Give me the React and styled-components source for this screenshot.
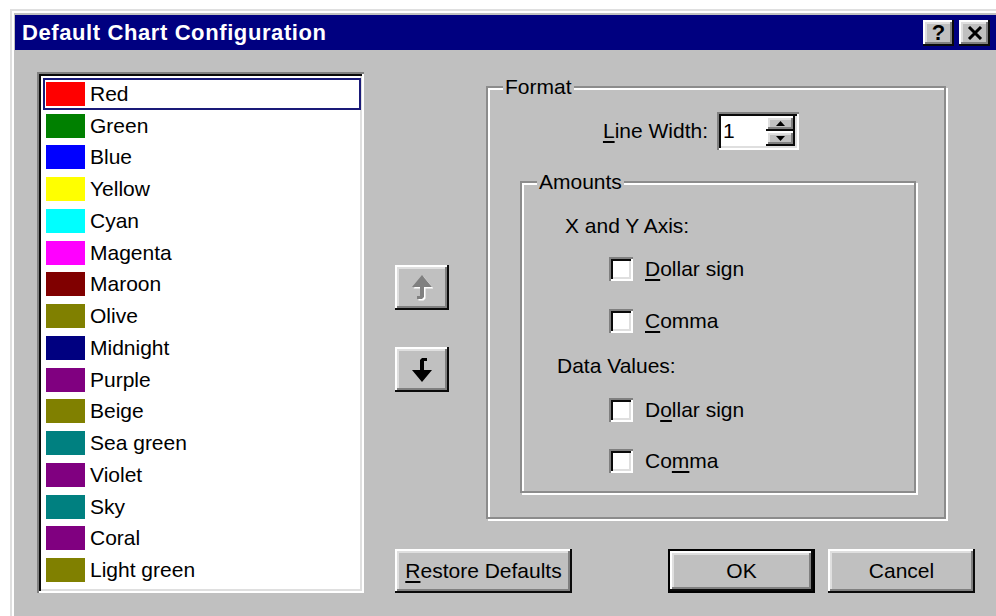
import React from "react";
import styled, { createGlobalStyle, css } from "styled-components";

const GlobalStyle = createGlobalStyle`
  html, body {
    margin: 0;
    padding: 0;
    background: #ffffff;
    overflow: hidden;
  }
  body {
    font-family: "Liberation Sans", Arial, sans-serif;
  }
`;

const raised = css`
  background: #c0c0c0;
  box-shadow: inset -2px -2px 0 #0a0a0a, inset 2px 2px 0 #ffffff,
    inset -4px -4px 0 #808080, inset 4px 4px 0 #dfdfdf;
`;

const sunken = css`
  background: #ffffff;
  box-shadow: inset 2px 2px 0 #808080, inset -2px -2px 0 #ffffff,
    inset 4px 4px 0 #0a0a0a, inset -4px -4px 0 #dfdfdf;
`;

const Window = styled.div`
  margin: 9px 0 0 10px;
  width: 1000px;
  height: 620px;
  box-sizing: border-box;
  background: #c0c0c0;
  border-left: 2px solid #dfdfdf;
  border-top: 2px solid #dfdfdf;
  box-shadow: inset 2px 2px 0 #ffffff;
  padding: 4px 0 0 3px;
`;

const TitleBar = styled.div`
  height: 35px;
  width: 981px;
  background: #000080;
  display: flex;
  align-items: center;
  padding: 0 6px 0 7px;
  box-sizing: border-box;
`;

const TitleText = styled.div`
  flex: 1;
  color: #ffffff;
  font-weight: 700;
  font-size: 22px;
  letter-spacing: 0.6px;
`;

const CaptionButton = styled.div`
  ${raised};
  width: 31px;
  height: 26px;
  margin-left: 5px;
  display: flex;
  align-items: center;
  justify-content: center;
  font-weight: 700;
  font-size: 22px;
  color: #000;
  box-sizing: border-box;
  padding-top: 1px;
`;

const Body = styled.div`
  display: flex;
  align-items: flex-start;
  padding: 22px 0 0 22px;
  font-size: 21px;
  color: #000;
`;

const ListBox = styled.div`
  ${sunken};
  width: 327px;
  height: 521px;
  box-sizing: border-box;
  padding: 6px 3px 0 6px;
`;

const ListRow = styled.div`
  height: 31.75px;
  display: flex;
  align-items: center;
  box-sizing: border-box;
  padding-left: 1px;
  border: 2px solid ${(p) => (p.$focused ? "#1a1a78" : "transparent")};
`;

const Swatch = styled.span`
  width: 39px;
  height: 24px;
  background: ${(p) => p.$color};
  margin-right: 5px;
  flex-shrink: 0;
`;

const RightSide = styled.div`
  margin-left: 31px;
  display: flex;
  flex-direction: column;
`;

const TopRow = styled.div`
  display: flex;
  align-items: flex-start;
`;

const ArrowColumn = styled.div`
  width: 54px;
  padding-top: 193px;
  display: flex;
  flex-direction: column;
  gap: 37px;
`;

const ArrowButton = styled.div`
  ${raised};
  width: 54px;
  height: 45px;
  display: flex;
  align-items: center;
  justify-content: center;
`;

const GroupBox = styled.div`
  position: relative;
  box-sizing: border-box;
  border: 2px solid #8c8c8c;
  box-shadow: inset 2px 2px 0 #ffffff, 2px 2px 0 #ffffff;
  width: ${(p) => p.$width}px;
  height: ${(p) => p.$height}px;
  margin: ${(p) => p.$margin};
`;

const GroupLabel = styled.span`
  position: absolute;
  top: -14px;
  left: 15px;
  padding: 0 2px;
  background: #c0c0c0;
  line-height: 26px;
`;

const SpinRow = styled.div`
  display: flex;
  align-items: center;
  justify-content: flex-end;
  padding-right: 145px;
  margin-top: 24px;
  gap: 9px;
`;

const SpinBox = styled.div`
  ${sunken};
  width: 82px;
  height: 38px;
  box-sizing: border-box;
  display: flex;
  padding: 4px 4px 4px 6px;
`;

const SpinValue = styled.div`
  flex: 1;
  line-height: 30px;
`;

const SpinArrows = styled.div`
  display: flex;
  flex-direction: column;
  width: 29px;
`;

const SpinArrow = styled.div`
  ${raised};
  flex: 1;
  display: flex;
  align-items: center;
  justify-content: center;
`;

const Heading = styled.div`
  line-height: 26px;
  margin-top: ${(p) => p.$top}px;
  padding-left: ${(p) => p.$indent}px;
`;

const CheckRow = styled.label`
  display: flex;
  align-items: center;
  margin-top: ${(p) => p.$top}px;
  padding-left: 87px;
  line-height: 26px;
  gap: 12px;
`;

const CheckBox = styled.span`
  ${sunken};
  width: 24px;
  height: 24px;
  box-sizing: border-box;
`;

const U = styled.span`
  text-decoration: underline;
  text-underline-offset: 3px;
`;

const BottomRow = styled.div`
  display: flex;
  align-items: center;
  margin-top: 30px;
`;

const PushButton = styled.div`
  ${raised};
  width: ${(p) => p.$width}px;
  height: 44px;
  margin-left: ${(p) => p.$left || 0}px;
  box-sizing: border-box;
  display: flex;
  align-items: center;
  justify-content: center;
  white-space: nowrap;
  ${(p) =>
    p.$default &&
    css`
      border: 2px solid #000;
    `}
`;

const colors = [
  ["Red", "#ff0000"],
  ["Green", "#008000"],
  ["Blue", "#0000ff"],
  ["Yellow", "#ffff00"],
  ["Cyan", "#00ffff"],
  ["Magenta", "#ff00ff"],
  ["Maroon", "#800000"],
  ["Olive", "#808000"],
  ["Midnight", "#000080"],
  ["Purple", "#800080"],
  ["Beige", "#808000"],
  ["Sea green", "#008080"],
  ["Violet", "#800080"],
  ["Sky", "#008080"],
  ["Coral", "#800080"],
  ["Light green", "#808000"],
];

// bent arrow, pointing down; the up one is the same shape turned round
const arrowPoints = "11,1 16,1 16,4 13,4 13,13 21,13 11,25 1,13 9,13 9,3";

const DownIcon = () => (
  <svg width="22" height="26" viewBox="0 0 22 26">
    <polygon points={arrowPoints} fill="#000" />
  </svg>
);

const UpIcon = () => (
  <svg width="22" height="27" viewBox="0 0 22 27">
    <g transform="rotate(180 11 13)">
      <polygon points={arrowPoints} fill="#ffffff" transform="translate(-1.5 -1.5)" />
      <polygon points={arrowPoints} fill="#808080" />
    </g>
  </svg>
);

const CloseIcon = () => (
  <svg width="16" height="14" viewBox="0 0 16 14">
    <path d="M2 1 L14 13 M14 1 L2 13" stroke="#000" strokeWidth="3" />
  </svg>
);

const Tri = ({ down }) => (
  <svg width="9" height="5" viewBox="0 0 9 5">
    <polygon points={down ? "0,0 9,0 4.5,5" : "0,5 9,5 4.5,0"} fill="#000" />
  </svg>
);

const App = () => (
  <>
    <GlobalStyle />
    <Window>
      <TitleBar>
        <TitleText>Default Chart Configuration</TitleText>
        <CaptionButton>?</CaptionButton>
        <CaptionButton>
          <CloseIcon />
        </CaptionButton>
      </TitleBar>
      <Body>
        <ListBox>
          {colors.map(([name, color], i) => (
            <ListRow key={name} $focused={i === 0}>
              <Swatch $color={color} />
              {name}
            </ListRow>
          ))}
        </ListBox>
        <RightSide>
          <TopRow>
            <ArrowColumn>
              <ArrowButton>
                <UpIcon />
              </ArrowButton>
              <ArrowButton>
                <DownIcon />
              </ArrowButton>
            </ArrowColumn>
            <GroupBox $width={460} $height={433} $margin="14px 0 0 37px">
              <GroupLabel>Format</GroupLabel>
              <SpinRow>
                <span>
                  <U>L</U>ine Width:
                </span>
                <SpinBox>
                  <SpinValue>1</SpinValue>
                  <SpinArrows>
                    <SpinArrow>
                      <Tri />
                    </SpinArrow>
                    <SpinArrow>
                      <Tri down />
                    </SpinArrow>
                  </SpinArrows>
                </SpinBox>
              </SpinRow>
              <GroupBox $width={396} $height={312} $margin="31px 0 0 32px">
                <GroupLabel>Amounts</GroupLabel>
                <Heading $top={30} $indent={43}>
                  X and Y Axis:
                </Heading>
                <CheckRow $top={17}>
                  <CheckBox />
                  <span>
                    <U>D</U>ollar sign
                  </span>
                </CheckRow>
                <CheckRow $top={26}>
                  <CheckBox />
                  <span>
                    <U>C</U>omma
                  </span>
                </CheckRow>
                <Heading $top={19} $indent={35}>
                  Data Values:
                </Heading>
                <CheckRow $top={18}>
                  <CheckBox />
                  <span>
                    D<U>o</U>llar sign
                  </span>
                </CheckRow>
                <CheckRow $top={25}>
                  <CheckBox />
                  <span>
                    Co<U>m</U>ma
                  </span>
                </CheckRow>
              </GroupBox>
            </GroupBox>
          </TopRow>
          <BottomRow>
            <PushButton $width={177}>
              <span>
                <U>R</U>estore Defaults
              </span>
            </PushButton>
            <PushButton $width={147} $left={96} $default>
              OK
            </PushButton>
            <PushButton $width={147} $left={13}>
              Cancel
            </PushButton>
          </BottomRow>
        </RightSide>
      </Body>
    </Window>
  </>
);

export default App;
